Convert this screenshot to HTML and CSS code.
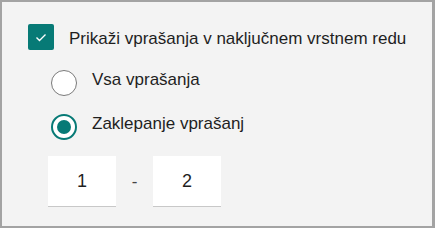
FILE: index.html
```html
<!doctype html>
<html lang="sl">
<head>
    <meta charset="UTF-8">
    <title>Nastavitve</title>
    <link rel="stylesheet" href="styles.css">
</head>
<body>
<div class="panel">
    <label class="check-row">
        <span class="checkbox">
            <svg width="26" height="26" viewBox="0 0 26 26">
                <polyline points="8.5,13.5 11.5,16.5 17.5,10.5" fill="none" stroke="#fff" stroke-width="1.4"/>
            </svg>
        </span>
        <span class="label">Prikaži vprašanja v naključnem vrstnem redu</span>
    </label>

    <div class="options">
        <label class="radio-row">
            <span class="radio"></span>
            <span class="label">Vsa vprašanja</span>
        </label>
        <label class="radio-row">
            <span class="radio checked"></span>
            <span class="label">Zaklepanje vprašanj</span>
        </label>
    </div>

    <div class="range">
        <div class="range-box">1</div>
        <div class="range-dash">-</div>
        <div class="range-box">2</div>
    </div>
</div>
</body>
</html>
```

FILE: styles.css
```css
html, body {
    margin: 0;
    padding: 0;
}

.panel {
    box-sizing: border-box;
    width: 435px;
    height: 228px;
    background: #f3f3f3;
    border: 2px solid #a3a3a3;
    border-right-width: 3px;
    padding: 22px 0 0 26px;
    font-family: "Liberation Sans", Arial, sans-serif;
    font-size: 17px;
    color: #1f1f1f;
}

.check-row,
.radio-row {
    display: flex;
    align-items: center;
}

.checkbox {
    width: 26px;
    height: 26px;
    border-radius: 2px;
    background: #077a76;
    flex-shrink: 0;
}

.checkbox svg {
    display: block;
}

.label {
    margin-left: 15px;
}

.check-row .label {
    padding-top: 4px;
}

.radio-row .label {
    padding-bottom: 6px;
}

.options {
    margin: 20px 0 0 23px;
}

.radio-row + .radio-row {
    margin-top: 18px;
}

.radio {
    box-sizing: border-box;
    width: 26px;
    height: 26px;
    border-radius: 50%;
    border: 1.5px solid #7a7a7a;
    background: #fff;
    flex-shrink: 0;
    display: flex;
    align-items: center;
    justify-content: center;
}

.radio.checked {
    border: 2px solid #077a76;
}

.radio.checked::after {
    content: "";
    width: 14px;
    height: 14px;
    border-radius: 50%;
    background: #077a76;
}

.range {
    display: flex;
    align-items: center;
    margin: 16px 0 0 20px;
}

.range-box {
    box-sizing: border-box;
    width: 68px;
    height: 51px;
    background: #fff;
    border-bottom: 1px solid #c8c8c8;
    display: flex;
    align-items: center;
    justify-content: center;
    font-size: 18px;
}

.range-dash {
    width: 37px;
    text-align: center;
    color: #444;
}
```
